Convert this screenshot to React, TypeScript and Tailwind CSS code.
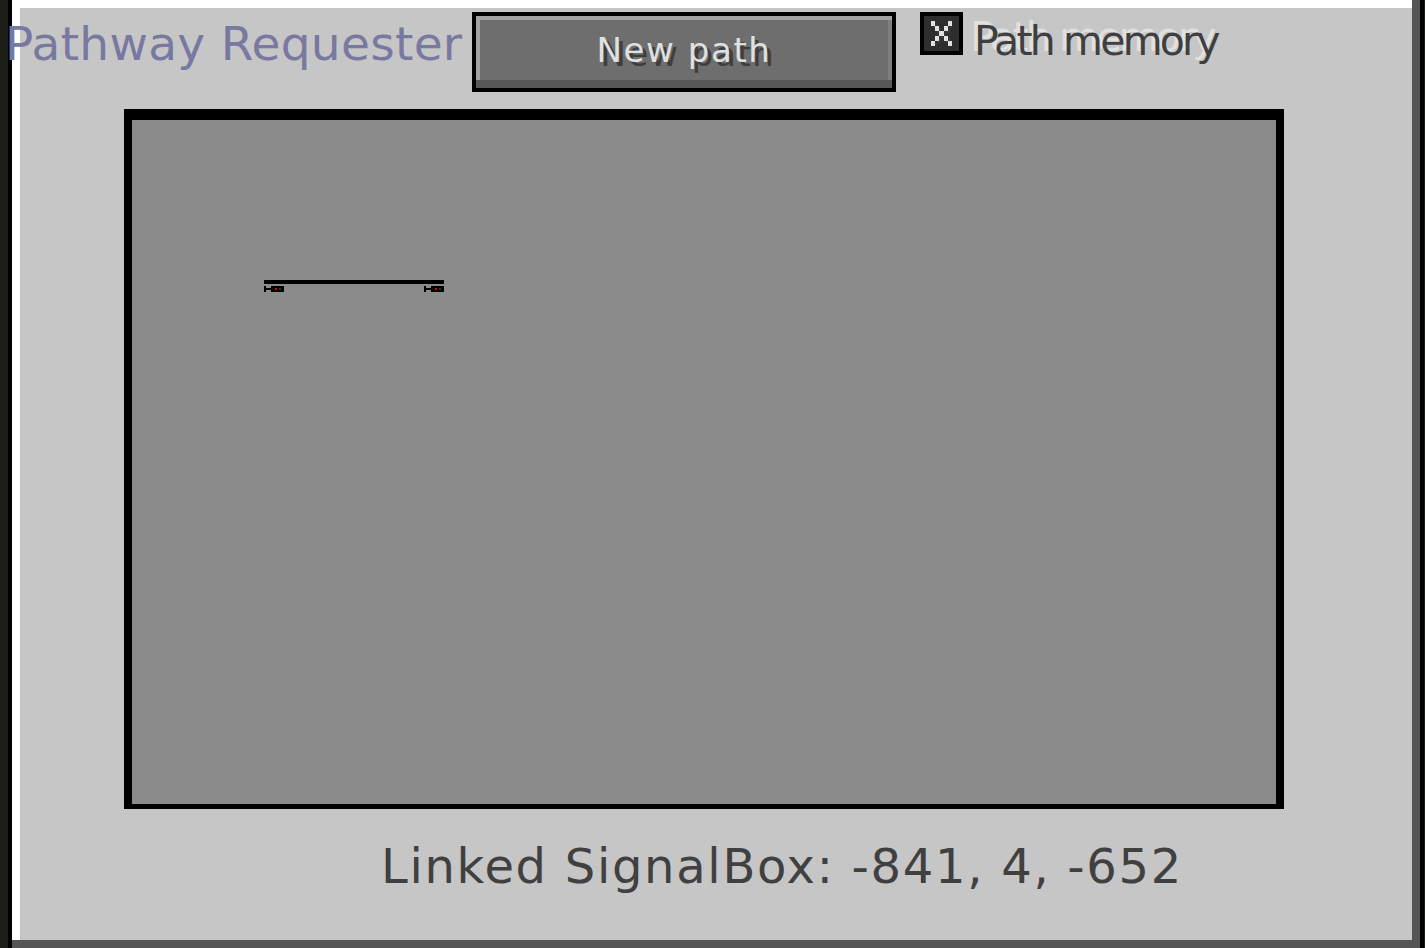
import React from "react";

const font = { fontFamily: '"DejaVu Sans", "Liberation Sans", sans-serif' };

function Signal() {
  return (
    <svg width="20" height="6" viewBox="0 0 20 6" shapeRendering="crispEdges">
      <rect x="0" y="0" width="2" height="6" fill="#000" />
      <rect x="2" y="2" width="5" height="2" fill="#000" />
      <rect x="7" y="0" width="13" height="6" fill="#000" />
      <rect x="11" y="2" width="2" height="2" fill="#e00000" />
      <rect x="15" y="2" width="2" height="2" fill="#1d3a1d" />
    </svg>
  );
}

function CheckX() {
  const cells: [number, number][] = [
    [0, 0], [4, 0], [1, 1], [3, 1], [2, 2], [1, 3], [3, 3], [0, 4], [4, 4],
  ];
  return (
    <svg width="21" height="25" viewBox="0 0 21 25" shapeRendering="crispEdges">
      {cells.map(([c, r], i) => (
        <rect key={"s" + i} x={c * 4.2 + 2} y={r * 5 + 2} width="4.2" height="5" fill="#3a3a3a" />
      ))}
      {cells.map(([c, r], i) => (
        <rect key={i} x={c * 4.2} y={r * 5} width="4.2" height="5" fill="#e0e0e0" />
      ))}
    </svg>
  );
}

export default function App() {
  return (
    <div className="w-[1425px] h-[948px] overflow-hidden bg-[#1b1f17] flex pl-[8px]" style={font}>
      <div className="w-[1416px] h-[948px] border-x-4 border-black shrink-0">
        <div className="h-full w-full bg-[#555555]">
          <div className="h-[940px] mr-[8px] bg-white pl-[8px] pt-[8px]">
            <div className="h-full w-full bg-[#c6c6c6] flex flex-col">
              {/* header */}
              <div className="flex items-start pt-[4px]">
                <div className="w-[472px] ml-[-20px] shrink-0 pt-[8px] pl-[5px]">
                  <span className="text-[47px] leading-none text-[#7878a0] whitespace-nowrap tracking-[0.3px]">
                    Pathway Requester
                  </span>
                </div>
                <div className="w-[424px] h-[80px] border-4 border-black shrink-0">
                  <div className="h-full w-full bg-[#6e6e6e] shadow-[inset_0_-8px_0_#575757,inset_4px_4px_0_#a2a2a2,inset_-4px_0_0_#7e7e7e] flex justify-center pt-[17px]">
                    <span className="text-[34px] leading-none text-[#e0e0e0] tracking-[1.6px] whitespace-nowrap [text-shadow:4px_4px_0_#3e3e3e]">
                      New path
                    </span>
                  </div>
                </div>
                <div className="ml-[24px] w-[43px] h-[43px] border-4 border-black bg-[#2e2e2e] flex items-center justify-center shrink-0">
                  <CheckX />
                </div>
                <div className="ml-[11px] pt-[9px]">
                  <span className="text-[41px] leading-none text-[#3f3f3f] tracking-[-2.8px] whitespace-nowrap [text-shadow:-4px_-4px_0_#e0e0e0]">
                    Path memory
                  </span>
                </div>
              </div>

              {/* canvas */}
              <div className="ml-[104px] mt-[17px] w-[1160px] h-[700px] bg-black pt-[11px] pl-[8px] pr-[8px] pb-[5px] shrink-0">
                <div className="relative h-full w-full bg-[#8b8b8b]">
                  <div className="absolute left-[132px] top-[160px] w-[180px] h-[4px] bg-black" />
                  <div className="absolute left-[132px] top-[166px] leading-none">
                    <Signal />
                  </div>
                  <div className="absolute left-[292px] top-[166px] leading-none">
                    <Signal />
                  </div>
                </div>
              </div>

              {/* footer */}
              <div className="ml-[361px] mt-[33px]">
                <span className="text-[48px] leading-none text-[#404040] tracking-[1.7px] whitespace-nowrap">
                  Linked SignalBox: -841, 4, -652
                </span>
              </div>
            </div>
          </div>
        </div>
      </div>
    </div>
  );
}
